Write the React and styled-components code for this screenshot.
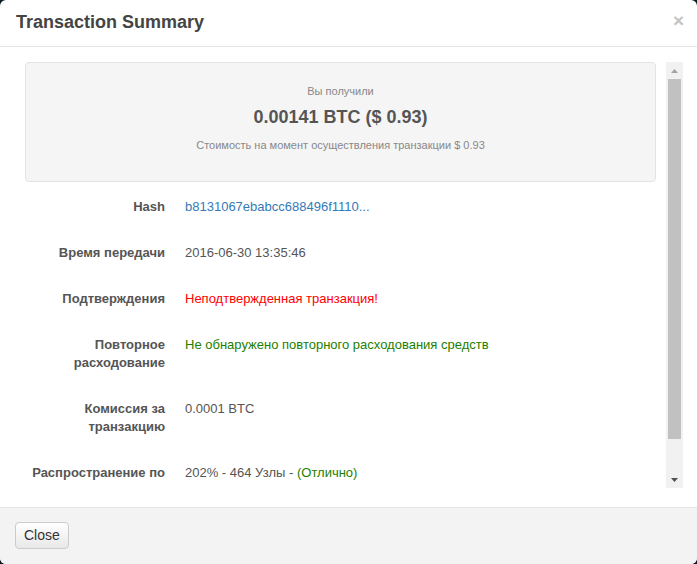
import React from 'react'
import styled, { createGlobalStyle } from 'styled-components'

const GlobalStyle = createGlobalStyle`
  html, body {
    margin: 0;
    padding: 0;
    background: #0b1b21;
  }
  body {
    font-family: "Liberation Sans", Arial, sans-serif;
    font-size: 13px;
    color: #555;
  }
`

const Modal = styled.div`
  width: 697px;
  height: 564px;
  background: #fff;
  border-radius: 6px;
  overflow: hidden;
  display: flex;
  flex-direction: column;
`

const Header = styled.div`
  height: 46px;
  border-bottom: 1px solid #e5e5e5;
  display: flex;
  align-items: center;
  justify-content: space-between;
  padding: 0 16px;
  box-sizing: content-box;
`

const Title = styled.h4`
  margin: 0;
  font-size: 18px;
  font-weight: bold;
  color: #444;
  margin-top: -1px;
`

const CloseX = styled.span`
  font-size: 19px;
  font-weight: bold;
  color: #c4c4c4;
  line-height: 1;
  margin-right: -3px;
  margin-top: -6px;
`

const Body = styled.div`
  flex: 1;
  padding: 15px 14px 19px 15px;
  display: flex;
  min-height: 0;
`

const Scroller = styled.div`
  flex: 1;
  overflow: hidden;
  padding: 0 10px;
`

const Well = styled.div`
  background: #f5f5f5;
  border: 1px solid #e3e3e3;
  border-radius: 4px;
  padding-top: 20px;
  box-sizing: border-box;
  text-align: center;
  height: 120px;
`

const Small = styled.div`
  font-size: 11px;
  color: #888;
  line-height: 16px;
`

const Amount = styled.div`
  font-size: 18px;
  font-weight: bold;
  color: #555;
  line-height: 24px;
  margin: 6px 0 8px;
`

const List = styled.div`
  padding-top: 16px;
  display: flex;
  flex-direction: column;
  gap: 28px;
`

const Row = styled.div`
  display: flex;
  gap: 20px;
  line-height: 18px;
`

const Label = styled.div`
  width: 140px;
  flex-shrink: 0;
  text-align: right;
  font-weight: bold;
  color: #555;
`

const Value = styled.div`
  color: ${p => p.$color || '#555'};
`

const Link = styled.a`
  color: #337ab7;
  text-decoration: none;
`

const Good = styled.span`
  color: #1e8000;
`

const Track = styled.div`
  width: 17px;
  background: #f1f1f1;
  display: flex;
  flex-direction: column;
  align-items: center;
`

const Arrow = styled.div`
  height: 17px;
  width: 17px;
  display: flex;
  align-items: center;
  justify-content: center;
`

const Thumb = styled.div`
  width: 13px;
  height: 360px;
  background: #c1c1c1;
`

const Spacer = styled.div`
  flex: 1;
`

const Footer = styled.div`
  height: 56px;
  border-top: 1px solid #e5e5e5;
  background: #f3f3f3;
  display: flex;
  align-items: center;
  padding: 0 15px;
`

const Button = styled.button`
  font-family: "Liberation Sans", Arial, sans-serif;
  font-size: 14px;
  color: #333;
  height: 27px;
  padding: 0 8px;
  border: 1px solid #ccc;
  border-radius: 4px;
  background: linear-gradient(#fff, #e8e8e8);
  margin-top: -2px;
`

const rows = [
  { label: 'Hash', value: <Link href="#">b8131067ebabcc688496f1110...</Link> },
  { label: 'Время передачи', value: '2016-06-30 13:35:46' },
  { label: 'Подтверждения', value: 'Неподтвержденная транзакция!', color: '#ff0000' },
  { label: 'Повторное расходование', value: 'Не обнаружено повторного расходования средств', color: '#1e8000' },
  { label: 'Комиссия за транзакцию', value: '0.0001 BTC' },
  { label: 'Распространение по', value: <>202% - 464 Узлы - <Good>(Отлично)</Good></> },
]

const App = () => (
  <>
    <GlobalStyle />
    <Modal>
      <Header>
        <Title>Transaction Summary</Title>
        <CloseX>×</CloseX>
      </Header>
      <Body>
        <Scroller>
          <Well>
            <Small>Вы получили</Small>
            <Amount>0.00141 BTC ($ 0.93)</Amount>
            <Small>Стоимость на момент осуществления транзакции $ 0.93</Small>
          </Well>
          <List>
            {rows.map(r => (
              <Row key={r.label}>
                <Label>{r.label}</Label>
                <Value $color={r.color}>{r.value}</Value>
              </Row>
            ))}
          </List>
        </Scroller>
        <Track>
          <Arrow>
            <svg width="7" height="4" viewBox="0 0 7 4"><path d="M3.5 0L7 4H0z" fill="#a3a3a3" /></svg>
          </Arrow>
          <Thumb />
          <Spacer />
          <Arrow>
            <svg width="7" height="4" viewBox="0 0 7 4"><path d="M0 0H7L3.5 4z" fill="#505050" /></svg>
          </Arrow>
        </Track>
      </Body>
      <Footer>
        <Button>Close</Button>
      </Footer>
    </Modal>
  </>
)

export default App
